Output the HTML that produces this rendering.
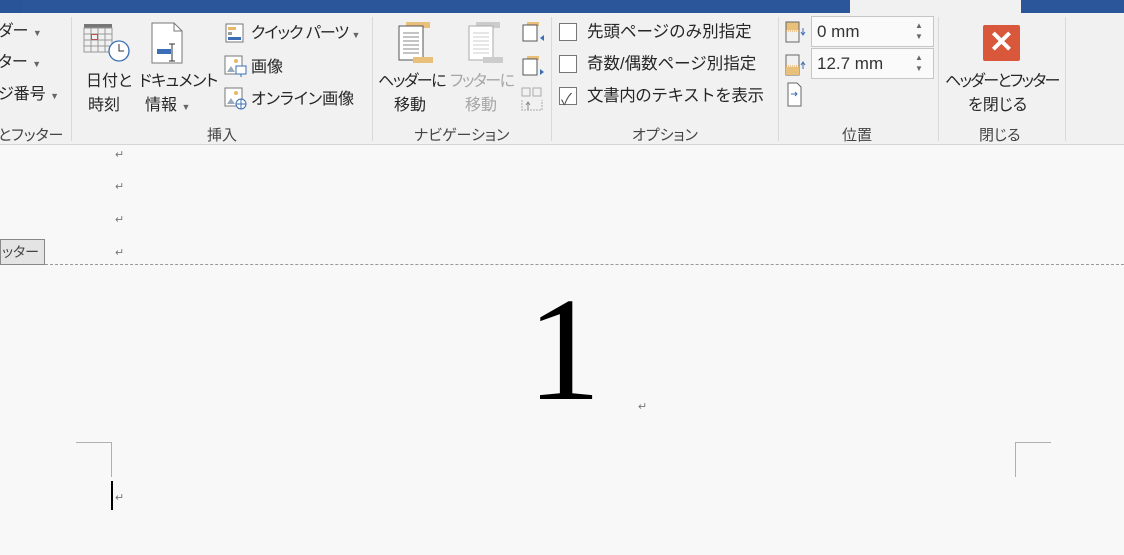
<!DOCTYPE html>
<html><head><meta charset="utf-8"><style>
*{margin:0;padding:0;box-sizing:border-box}
body{width:1124px;height:555px;overflow:hidden;background:#f8f8f8;font-family:"Liberation Sans","Noto Sans CJK JP",sans-serif;color:#262626;position:relative;font-feature-settings:"palt"}
.a{position:absolute;white-space:nowrap}
.t{font-size:16px;line-height:20px}
.f{font-feature-settings:normal;font-size:16.5px;line-height:20px}
.g{font-size:15px;color:#444}
.sep{position:absolute;top:17px;width:1px;height:124px;background:#dadada}
.pm{position:absolute;font-size:11px;color:#777}
.cb{position:absolute;width:18px;height:18px;border:1px solid #777;background:#fff}
.dd{font-size:9px;color:#666;letter-spacing:0}
</style></head><body>
<div class="a" style="left:0;top:0;width:1124px;height:145px;background:#f1f1f1;border-bottom:1px solid #d4d4d4"></div>
<div class="a" style="left:0;top:0;width:850px;height:13px;background:#2b579a"></div>
<div class="a" style="left:0;top:0;width:22px;height:13px;background:#295497"></div>
<div class="a" style="left:1021px;top:0;width:103px;height:13px;background:#2b579a"></div>

<div class="a t" style="left:-2px;top:22px">ダー <span class="dd">▼</span></div>
<div class="a t" style="left:-2px;top:53px">ター <span class="dd">▼</span></div>
<div class="a t" style="left:-2px;top:85px">ジ番号 <span class="dd">▼</span></div>
<div class="a g" style="left:-2px;top:124px">とフッター</div>
<div class="sep" style="left:71px"></div>

<svg class="a" style="left:83px;top:23px" width="48" height="42"><rect x="1" y="1" width="28" height="4" fill="#777"/><g stroke="#999" fill="none"><rect x="1" y="5" width="28" height="24"/><path d="M1 11h28M1 17h28M1 23h28M8 5v24M15 5v24M22 5v24"/></g><rect x="8.5" y="11.5" width="6" height="5" fill="none" stroke="#c0504d"/><circle cx="36" cy="28" r="10" fill="#fff" stroke="#3a6fb5" stroke-width="1.3"/><path d="M36 21v7h5" stroke="#333" fill="none"/></svg>
<div class="a t" style="left:86px;top:72px">日付と</div>
<div class="a t" style="left:88px;top:96px">時刻</div>
<svg class="a" style="left:150px;top:22px" width="36" height="44"><path d="M2 1h22l8 8v32H2z" fill="#fff" stroke="#777"/><path d="M24 1v8h8" fill="none" stroke="#777"/><rect x="7" y="27" width="14" height="5" fill="#3a6fb5"/><path d="M22 22v17M19 22h6M19 39h6" stroke="#333"/></svg>
<div class="a t" style="left:139px;top:72px;letter-spacing:-0.5px">ドキュメント</div>
<div class="a t" style="left:145px;top:96px">情報 <span class="dd">▼</span></div>
<svg class="a" style="left:225px;top:23px" width="20" height="20"><rect x="1" y="1" width="17" height="18" fill="#fff" stroke="#777"/><rect x="3" y="4" width="8" height="3" fill="#e8b86a"/><rect x="3" y="9" width="4" height="3" fill="#999"/><rect x="3" y="14" width="13" height="3" fill="#3a6fb5"/></svg>
<div class="a t" style="left:251px;top:24px;letter-spacing:-1px">クイック パーツ <span class="dd">▼</span></div>
<svg class="a" style="left:224px;top:55px" width="24" height="24"><rect x="1" y="1" width="17" height="18" fill="#fff" stroke="#777"/><circle cx="12" cy="6" r="2" fill="#e8b86a"/><path d="M3 17l4-6 4 6z" fill="#9ab"/><rect x="12" y="11" width="10" height="8" fill="#fff" stroke="#3a6fb5"/><path d="M17 19v3" stroke="#3a6fb5"/></svg>
<div class="a t" style="left:251px;top:58px">画像</div>
<svg class="a" style="left:224px;top:87px" width="24" height="24"><rect x="1" y="1" width="17" height="18" fill="#fff" stroke="#777"/><circle cx="12" cy="6" r="2" fill="#e8b86a"/><path d="M3 17l4-6 4 6z" fill="#9ab"/><circle cx="17" cy="17" r="5" fill="#fff" stroke="#3a6fb5"/><path d="M12 17h10M17 12v10" stroke="#3a6fb5"/></svg>
<div class="a t" style="left:251px;top:90px">オンライン画像</div>
<div class="a g" style="left:207px;top:124px">挿入</div>
<div class="sep" style="left:372px"></div>

<svg class="a" style="left:396px;top:21px" width="40" height="44"><rect x="10" y="1" width="24" height="6" fill="#e8c07a"/><rect x="3" y="5" width="24" height="34" fill="#fff" stroke="#555"/><path d="M7 12h16M7 16h16M7 20h16M7 24h16M7 28h16M7 32h16" stroke="#888"/><rect x="17" y="36" width="20" height="6" fill="#e8c07a"/></svg>
<div class="a t" style="left:378px;top:72px;letter-spacing:-1.5px">ヘッダーに</div>
<div class="a t" style="left:394px;top:96px">移動</div>
<svg class="a" style="left:466px;top:21px" width="40" height="44"><rect x="10" y="1" width="24" height="6" fill="#ccc"/><rect x="3" y="5" width="24" height="34" fill="#fff" stroke="#aaa"/><path d="M7 12h16M7 16h16M7 20h16M7 24h16M7 28h16M7 32h16" stroke="#ccc"/><rect x="17" y="36" width="20" height="6" fill="#ccc"/></svg>
<div class="a t" style="left:450px;top:72px;color:#a6a6a6;letter-spacing:-1.5px">フッターに</div>
<div class="a t" style="left:465px;top:96px;color:#a6a6a6">移動</div>
<svg class="a" style="left:521px;top:21px" width="24" height="90"><rect x="6" y="1" width="12" height="4" fill="#e8c07a"/><rect x="2" y="4" width="14" height="16" fill="#fff" stroke="#555"/><path d="M19 17l4-3v6z" fill="#3a6fb5"/><rect x="6" y="35" width="12" height="4" fill="#e8c07a"/><rect x="2" y="38" width="14" height="16" fill="#fff" stroke="#555"/><path d="M19 48l4 3-4 3z" fill="#3a6fb5"/><g stroke="#aaa" fill="none"><rect x="1" y="67" width="8" height="8"/><rect x="12" y="67" width="8" height="8"/><path d="M1 79v10h20v-10" stroke-dasharray="2 1"/></g><path d="M7 89v-7M5 84l2-3 2 3" stroke="#888" fill="none"/></svg>
<div class="a g" style="left:414px;top:124px">ナビゲーション</div>
<div class="sep" style="left:551px"></div>

<div class="cb" style="left:559px;top:23px"></div>
<div class="a f" style="left:587px;top:22px">先頭ページのみ別指定</div>
<div class="cb" style="left:559px;top:55px"></div>
<div class="a f" style="left:587px;top:54px">奇数/偶数ページ別指定</div>
<div class="cb" style="left:559px;top:87px"></div>
<div class="a" style="left:561px;top:86px;font-size:16px;color:#555">✓</div>
<div class="a f" style="left:587px;top:86px;letter-spacing:-0.4px">文書内のテキストを表示</div>
<div class="a g" style="left:632px;top:124px">オプション</div>
<div class="sep" style="left:778px"></div>

<svg class="a" style="left:785px;top:21px" width="26" height="90"><rect x="1" y="1" width="13" height="8" fill="#e8c07a"/><rect x="1" y="1" width="13" height="20" fill="none" stroke="#666"/><path d="M1 10h13" stroke="#e8a040" stroke-dasharray="1 1"/><path d="M18 7v7M16 11l2 3 2-3" stroke="#3a6fb5" fill="none"/><rect x="1" y="34" width="13" height="20" fill="none" stroke="#666"/><rect x="1" y="46" width="13" height="8" fill="#e8c07a"/><path d="M1 45h13" stroke="#e8a040" stroke-dasharray="1 1"/><path d="M18 48v-7M16 44l2-3 2 3" stroke="#3a6fb5" fill="none"/><path d="M3 62h9l4 4v19H3z" fill="#fff" stroke="#666"/><path d="M6 73h6M10 71l2 2-2 2" stroke="#3a6fb5" fill="none"/></svg>
<div class="a" style="left:811px;top:16px;width:123px;height:31px;border:1px solid #c6c6c6;background:#fafafa"></div>
<div class="a" style="left:817px;top:22px;font-size:17px;color:#333">0 mm</div>
<div class="a" style="left:915px;top:20px;font-size:8px;color:#666;line-height:11px">▲<br>▼</div>
<div class="a" style="left:811px;top:48px;width:123px;height:31px;border:1px solid #c6c6c6;background:#fafafa"></div>
<div class="a" style="left:817px;top:54px;font-size:17px;color:#333">12.7 mm</div>
<div class="a" style="left:915px;top:52px;font-size:8px;color:#666;line-height:11px">▲<br>▼</div>
<div class="a g" style="left:842px;top:124px">位置</div>
<div class="sep" style="left:938px"></div>

<div class="a" style="left:983px;top:25px;width:37px;height:36px;background:#d9583b;border-radius:2px;color:#fff;font-size:30px;font-weight:bold;text-align:center;line-height:36px">✕</div>
<div class="a t" style="left:945px;top:72px;letter-spacing:-1.7px">ヘッダーとフッター</div>
<div class="a t" style="left:968px;top:96px">を閉じる</div>
<div class="a g" style="left:979px;top:124px">閉じる</div>
<div class="sep" style="left:1065px"></div>

<div class="pm" style="left:115px;top:148px">↵</div>
<div class="pm" style="left:115px;top:180px">↵</div>
<div class="pm" style="left:115px;top:213px">↵</div>
<div class="pm" style="left:115px;top:246px">↵</div>
<div class="a" style="left:0;top:239px;width:45px;height:26px;border:1px solid #888;background:#e4e4e4;font-size:14px;line-height:24px;color:#444;padding-left:1px">ッター</div>
<div class="a" style="left:45px;top:264px;width:1079px;border-top:1px dashed #999"></div>
<div class="a" style="left:527px;top:276px;font-family:'Liberation Serif',serif;font-size:148px;line-height:148px;color:#000">1</div>
<div class="pm" style="left:638px;top:400px">↵</div>
<div class="a" style="left:76px;top:442px;width:35px;height:1px;background:#b0b0b0"></div>
<div class="a" style="left:111px;top:442px;width:1px;height:35px;background:#b0b0b0"></div>
<div class="a" style="left:1015px;top:442px;width:36px;height:1px;background:#b0b0b0"></div>
<div class="a" style="left:1015px;top:442px;width:1px;height:35px;background:#b0b0b0"></div>
<div class="a" style="left:111px;top:481px;width:2px;height:29px;background:#000"></div>
<div class="pm" style="left:115px;top:491px">↵</div>
</body></html>
